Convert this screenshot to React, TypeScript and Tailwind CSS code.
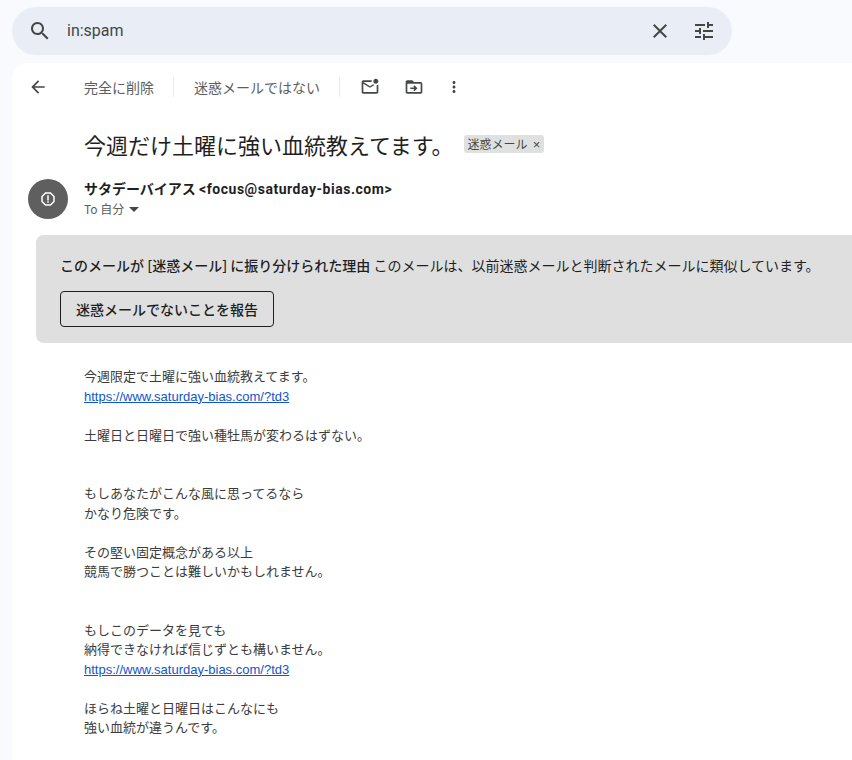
const jp = '"Noto Sans CJK JP", sans-serif';

function Icon({ d, size = 24, className = '' }: { d: string; size?: number; className?: string }) {
  return (
    <svg width={size} height={size} viewBox="0 0 24 24" fill="currentColor" className={className}>
      <path d={d} />
    </svg>
  );
}

const icons = {
  search:
    'M15.5 14h-.79l-.28-.27C15.41 12.59 16 11.11 16 9.5 16 5.91 13.09 3 9.5 3S3 5.91 3 9.5 5.91 16 9.5 16c1.61 0 3.09-.59 4.23-1.57l.27.28v.79l5 4.99L20.49 19l-4.99-5zm-6 0C7.01 14 5 11.99 5 9.5S7.01 5 9.5 5 14 7.01 14 9.5 11.99 14 9.5 14z',
  close:
    'M19 6.41L17.59 5 12 10.59 6.41 5 5 6.41 10.59 12 5 17.59 6.41 19 12 13.41 17.59 19 19 17.59 13.41 12z',
  tune: 'M3 17v2h6v-2H3zM3 5v2h10V5H3zm10 16v-2h8v-2h-8v-2h-2v6h2zM7 9v2H3v2h4v2h2V9H7zm14 4v-2H11v2h10zm-6-4h2V7h4V5h-4V3h-2v6z',
  back: 'M20 11H7.83l5.59-5.59L12 4l-8 8 8 8 1.41-1.41L7.83 13H20v-2z',
  more: 'M12 8c1.1 0 2-.9 2-2s-.9-2-2-2-2 .9-2 2 .9 2 2 2zm0 2c-1.1 0-2 .9-2 2s.9 2 2 2 2-.9 2-2-.9-2-2-2zm0 6c-1.1 0-2 .9-2 2s.9 2 2 2 2-.9 2-2-.9-2-2-2z',
  unread:
    'M22 8.98V18c0 1.1-.9 2-2 2H4c-1.1 0-2-.9-2-2V6c0-1.1.9-2 2-2h10.1c-.06.32-.1.66-.1 1 0 .34.04.68.1 1H4l8 5 3.67-2.29c.47.43 1.02.76 1.63.98L12 13 4 8v10h16V9.9c.74-.15 1.42-.48 2-.92zM16 5c0 1.66 1.34 3 3 3s3-1.34 3-3-1.34-3-3-3-3 1.34-3 3z',
  move: 'M20 6h-8l-2-2H4c-1.1 0-1.99.9-1.99 2L2 18c0 1.1.9 2 2 2h16c1.1 0 2-.9 2-2V8c0-1.1-.9-2-2-2zm0 12H4V8h16v10zM12.6 10l-1.4 1.4 1.1 1.1H7.5v2h4.8l-1.1 1.1 1.4 1.4 3.5-3.5z',
  report:
    'M15.73 3H8.27L3 8.27v7.46L8.27 21h7.46L21 15.73V8.27L15.73 3zM19 14.9L14.9 19H9.1L5 14.9V9.1L9.1 5h5.8L19 9.1v5.8zM11 7h2v7h-2zM11 15h2v2h-2z',
};

function Link() {
  return (
    <a className="text-[#1155cc] underline font-['Liberation_Sans',sans-serif]">
      https://www.saturday-bias.com/?td3
    </a>
  );
}

export default function App() {
  return (
    <div className="h-[760px] w-[852px] overflow-hidden bg-[#f8fafd]" style={{ fontFamily: jp }}>
      {/* search */}
      <div className="pt-[7px] pl-3">
        <div className="flex h-12 w-[720px] items-center rounded-full bg-[#e9eef6] pl-4 pr-4 text-[#444746]">
          <Icon d={icons.search} />
          <span className="ml-[15px] flex-1 text-[16px] font-['Roboto',sans-serif]">in:spam</span>
          <Icon d={icons.close} />
          <Icon d={icons.tune} className="ml-5" />
        </div>
      </div>

      {/* mail card */}
      <div className="mt-2 ml-3 h-[700px] rounded-tl-2xl bg-white">
        <div className="flex h-12 items-center text-[#444746]">
          <Icon d={icons.back} size={20} className="ml-4" />
          <span className="ml-[36px] text-[14px] text-[#5e5e5e]">完全に削除</span>
          <span className="ml-[19px] h-5 w-px bg-[#e8eaed]" />
          <span className="ml-5 text-[14px] text-[#5e5e5e]">迷惑メールではない</span>
          <span className="ml-[19px] h-5 w-px bg-[#e8eaed]" />
          <Icon d={icons.unread} size={20} className="ml-5" />
          <Icon d={icons.move} size={20} className="ml-6" />
          <Icon d={icons.more} size={18} className="ml-[21px]" />
        </div>

        <div className="mt-[17px] flex h-8 items-center pl-[72px]">
          <h1 className="text-[22px] leading-8 font-normal text-[#1f1f1f]">今週だけ土曜に強い血統教えてます。</h1>
          <span className="ml-[10px] flex h-[18px] items-center rounded-[3px] bg-[#dfe1e0] pr-1 pl-1 text-[12px] leading-none text-[#444746]">
            迷惑メール
            <span className="ml-[5px] text-[13px] font-['Liberation_Sans',sans-serif]">×</span>
          </span>
        </div>

        <div className="mt-[19px] flex pl-4">
          <div className="flex h-10 w-10 items-center justify-center rounded-full bg-[#5f5f5f] text-white">
            <Icon d={icons.report} size={18} />
          </div>
          <div className="ml-4 -mt-px">
            <div className="text-[14px] leading-5 font-bold text-[#1f1f1f]">
              サタデーバイアス{' '}
              <span className="tracking-[0.53px] font-['Roboto',sans-serif]">&lt;focus@saturday-bias.com&gt;</span>
            </div>
            <div className="flex h-5 items-center text-[12px] text-[#5e5e5e]">
              To 自分
              <svg width="10" height="5" viewBox="0 0 10 5" className="ml-[5px]" fill="#444746">
                <path d="M0 0h10L5 5z" />
              </svg>
            </div>
          </div>
        </div>

        <div className="mt-4 ml-6 h-[108px] rounded-l-lg bg-[#dfdfdf] pt-5 pl-6">
          <div className="text-[14px] leading-5 whitespace-nowrap text-[#1f1f1f]">
            <span className="font-medium">このメールが [迷惑メール] に振り分けられた理由</span> このメールは、以前迷惑メールと判断されたメールに類似しています。
          </div>
          <button className="mt-4 flex h-9 w-[214px] items-center justify-center rounded border border-[#1f1f1f] text-[14px] font-medium text-[#1f1f1f]">
            迷惑メールでないことを報告
          </button>
        </div>

        <div className="mt-[23px] pl-[72px] text-[13px] leading-[19.5px] text-[#3c3c3c]">
          <div>今週限定で土曜に強い血統教えてます。</div>
          <div className="h-[19.5px]"><Link /></div>
          <br />
          <div>土曜日と日曜日で強い種牡馬が変わるはずない。</div>
          <br />
          <br />
          <div>もしあなたがこんな風に思ってるなら</div>
          <div>かなり危険です。</div>
          <br />
          <div>その堅い固定概念がある以上</div>
          <div>競馬で勝つことは難しいかもしれません。</div>
          <br />
          <br />
          <div>もしこのデータを見ても</div>
          <div>納得できなければ信じずとも構いません。</div>
          <div className="h-[19.5px]"><Link /></div>
          <br />
          <div>ほらね土曜と日曜日はこんなにも</div>
          <div>強い血統が違うんです。</div>
        </div>
      </div>
    </div>
  );
}
